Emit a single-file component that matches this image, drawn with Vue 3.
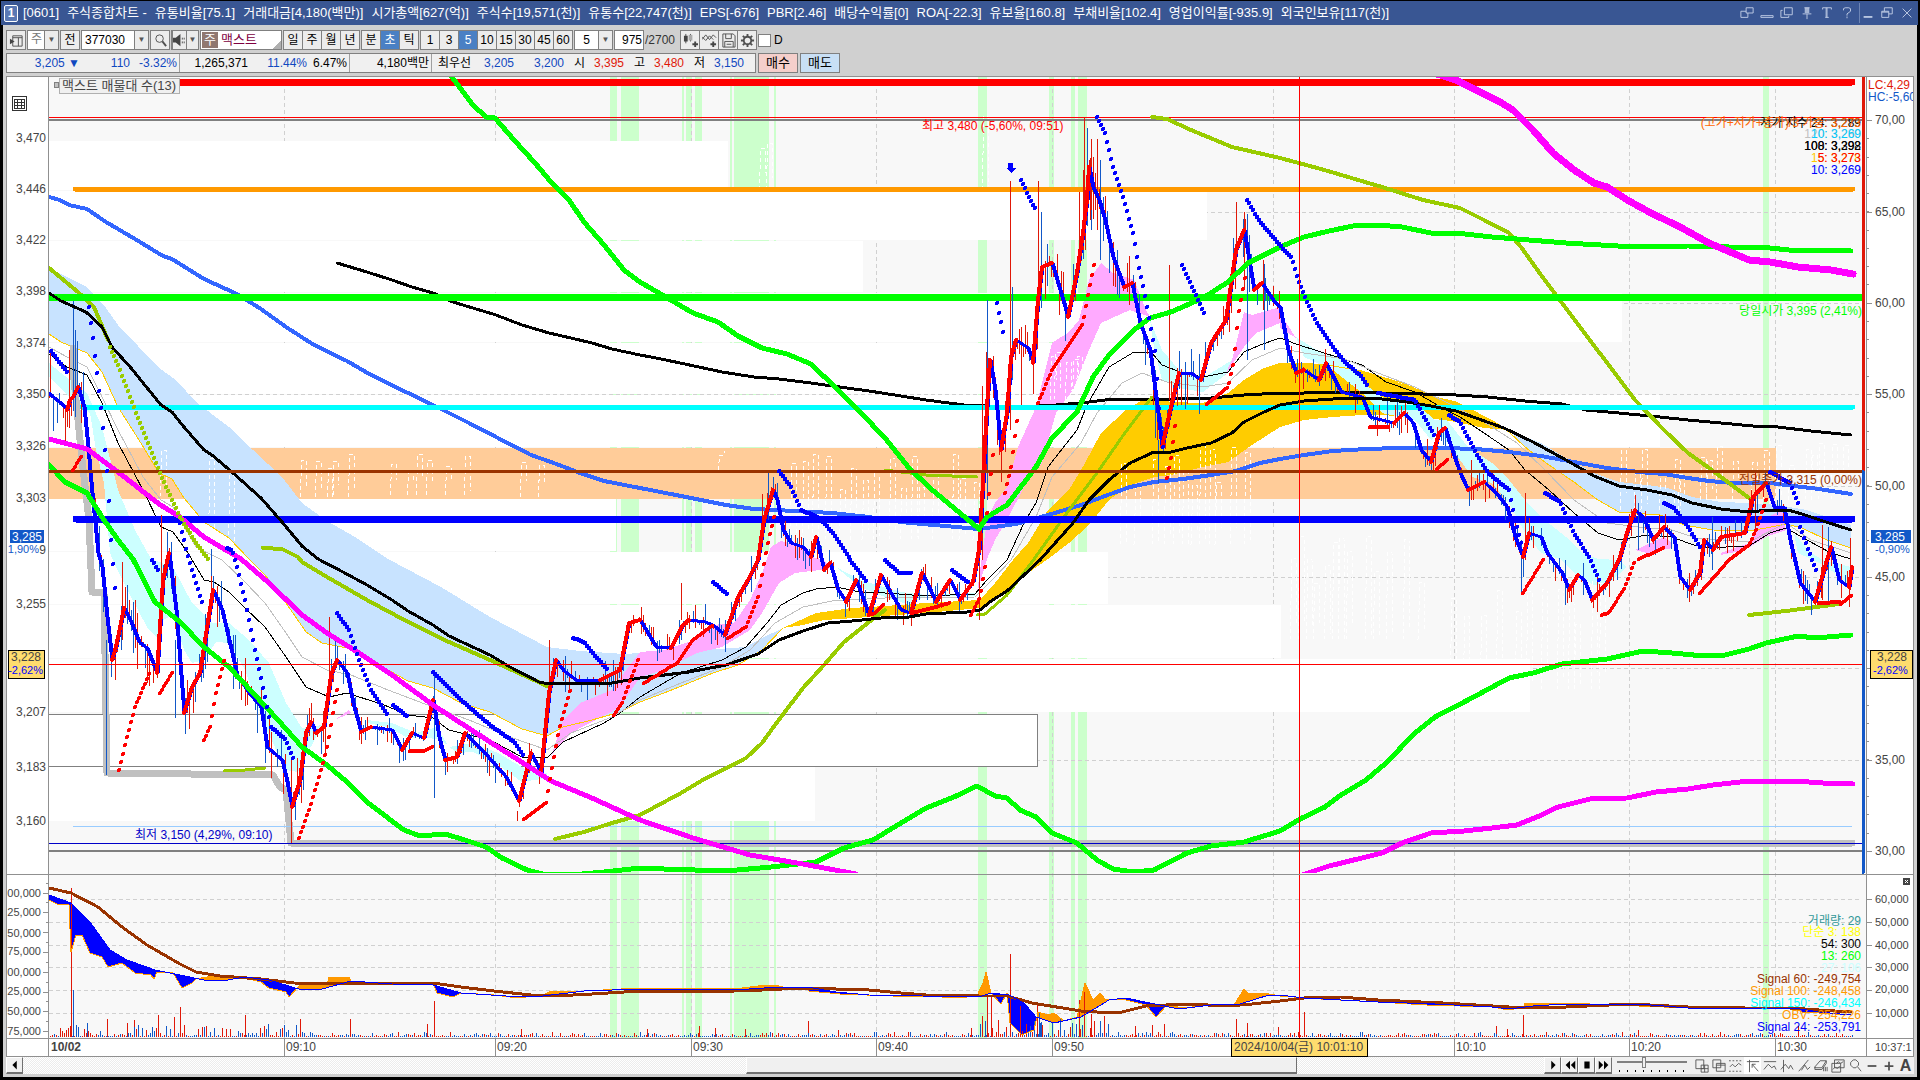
<template>
  <div class="window">
    <header class="titlebar">
      <span class="badge">1</span>
      <h1 class="title">
        <span v-for="t in titleParts" :key="t">{{ t }}</span>
      </h1>
      <div class="win-buttons">
        <button v-for="b in winButtons" :key="b.label" :aria-label="b.label" :class="{ split: b.split }">
          <svg viewBox="0 0 16 16"><path :d="b.d" /></svg>
        </button>
      </div>
    </header>

    <main class="body">
      <div class="toolbar">
        <button class="tool" aria-label="패널">
          <svg viewBox="0 0 16 16"><path d="M4 3h10v11H4zM4 5h10M10 5v9" /><path class="solid" d="M1 6l5 3-5 3z" /></svg>
        </button>
        <span class="combo c-type"><span class="dim">주</span><button aria-label="종류">▼</button></span>
        <button class="tool">전</button>
        <span class="combo c-code"><input aria-label="종목코드" value="377030" /><button aria-label="종목 목록">▼</button></span>
        <button class="tool" aria-label="검색">
          <svg viewBox="0 0 16 16"><circle cx="7" cy="6" r="4" /><path class="bold" d="M10 9l4 5" /></svg>
        </button>
        <span class="combo c-sound">
          <button aria-label="소리"><svg viewBox="0 0 16 16"><path class="solid" d="M1 5h3l5-4v13l-5-4H1z" /><path d="M11 5v2M13 5v2M11 9v2M13 9v2" /></svg></button>
          <button aria-label="소리 설정">▼</button>
        </span>
        <span class="stock"><i>주</i>맥스트</span>
        <div v-for="(g, i) in groups" :key="i" class="group">
          <button v-for="b in g" :key="b" :class="{ on: b === '초' || b === '5' }">{{ b }}</button>
        </div>
        <span class="combo c-num"><input aria-label="주기" value="5" /><button aria-label="주기 목록">▼</button></span>
        <span class="combo c-count"><input aria-label="봉 개수" value="975" /></span>
        <span class="total">/2700</span>
        <div class="group icons">
          <button aria-label="차트 추가"><svg viewBox="0 0 16 16"><path d="M3 1v10M8 1v8" /><path class="solid" d="M1 3h4v6H1zM10 11h6v2h-6zM12 9h2v6h-2z" /><path class="soft" d="M6 2h4v6H6z" /></svg></button>
          <button aria-label="지표 추가"><svg viewBox="0 0 16 16"><path d="M0 7l4-5 4 5 4-5 3 3M0 4l4 4 4-5 4 4" /><path class="solid" d="M9 11h6v2H9zM11 9h2v6h-2z" /></svg></button>
          <button aria-label="저장"><svg viewBox="0 0 16 16"><path d="M2 1h11l2 2v12H2zM5 1v5h6V1M4 15v-6h9v6M6 12h5" /></svg></button>
          <button aria-label="설정"><svg viewBox="0 0 16 16"><circle class="bold" cx="8" cy="8" r="4" /><path class="bold" d="M8 1v3M8 12v3M1 8h3M12 8h3M3 3l2 2M11 11l2 2M13 3l-2 2M3 13l2-2" /></svg></button>
        </div>
        <label class="check"><input type="checkbox" />D</label>
      </div>

      <div class="quote">
        <div class="cells">
          <span v-for="(q, i) in quotes" :key="i" :class="['q', q[1], q[2], { line: q[3] }]">{{ q[0] }}</span>
        </div>
        <button class="buy">매수</button>
        <button class="sell">매도</button>
      </div>

      <svg class="chart" viewBox="6 76 1908 981" role="img" aria-label="맥스트 주가 차트">
        <defs>
          <clipPath id="plot"><rect x="49" y="77" width="1813" height="796" /></clipPath>
          <clipPath id="frame"><rect x="6" y="76" width="1907" height="981" /></clipPath>
        </defs>
        <rect class="paper" x="6" y="76" width="1908" height="981" />
        <rect class="plot-bg" x="49" y="77" width="1818" height="961" />

        <rect v-for="b in bands" :key="b[0]" class="band" :x="b[0]" y="77" :width="b[1]" height="961" />
        <path class="grid" :d="gridPath" />
        <rect v-for="p in profile" :key="p[0]" class="profile" x="49" :y="p[0]" :width="p[2] - 49" :height="p[1] - p[0] - 1" />
        <rect class="profile-now" x="49" y="448" width="1727" height="51" />
        <rect class="profile-box" x="48" y="714" width="989" height="52" />

        <g clip-path="url(#plot)">
          <path v-for="(c, i) in clouds" :key="'c' + i" :fill="c[0]" :d="toPath(c[1]) + 'Z'" />
          <path class="ghost" :d="ghostPath" />
          <path class="ln" stroke="#ffcc00" :d="toPath(yellowEdge)" />
          <path class="ln" stroke="#ffcc00" :d="toPath(yellowEdgeRight)" />
          <path class="ln" stroke="#c0c0c0" stroke-width="7" :d="toPath(stair)" />
          <path class="ln" stroke="#c0c0c0" stroke-width="7" d="M291 843H1852" />
          <path class="ln" stroke="#99ccff" d="M73 826H1852" />
          <path class="ln" stroke="#0000c8" d="M49 843H1862" />
          <path class="ln" stroke="#808080" stroke-width="2" d="M49 851H1862M49 120H1862" />
          <path class="ln" stroke="#ff0000" stroke-width="7" d="M179 82H1852" />
          <path class="ln" stroke="#ff0000" d="M49 117H1862" />
          <path class="ln" stroke="#ff9900" stroke-width="5" d="M75 189H1853" />
          <path v-for="(s, i) in thin" :key="'t' + i" class="ln" :stroke="s[0]" :stroke-width="s[1]" :d="toPath(s[2])" />
          <path class="ln" stroke="#00ff00" stroke-width="7" d="M49 297H1862" />
          <path class="ln" stroke="#00ffff" stroke-width="5" d="M82 407H1853" />
          <path class="ln" stroke="#0000ff" stroke-width="7" d="M76 519H1852" />
          <path class="ln" stroke="#1258c8" :d="wicks.down" />
          <path class="ln" stroke="#e01808" :d="wicks.up" />
          <path class="ln" stroke="#0000ff" :d="toPath(slowPrice)" />
          <path class="ln" stroke="#0000ff" stroke-width="3" :d="body.down" />
          <path class="ln" stroke="#ff0000" stroke-width="4" :d="body.up" />
          <path v-for="(s, i) in thick" :key="'k' + i" class="ln" :stroke="s[0]" :stroke-width="s[1]" :d="toPath(s[2])" />
          <path class="ln" stroke="#993300" stroke-width="3" d="M49 471H1862" />
          <path class="ln" stroke="#99cc00" stroke-width="4" :d="dots(oliveDots)" />
          <path class="ln" stroke="#0000ff" stroke-width="4" :d="dots(sarDown)" />
          <path class="ln" stroke="#ff0000" stroke-width="4" :d="dots(sarUp)" />
          <path fill="#0000ff" d="M1008 163h5v5h3l-5 5-5-5h2z" />
        </g>

        <g>
          <path class="ln" stroke="#ff9900" :d="obvFill.above" />
          <path class="ln" stroke="#0000ff" :d="obvFill.below" />
          <path class="ln" stroke="#e01808" :d="volume.up" />
          <path class="ln" stroke="#1258c8" :d="volume.down" />
          <path class="ln" stroke="#ff9900" :d="toPath(obv)" />
          <path class="ln" stroke="#993300" stroke-width="3" :d="toPath(signal60)" />
          <path class="ln" stroke="#0000ff" :d="toPath(signal24)" />
        </g>

        <path class="ln" stroke="#ff0000" d="M49 664H1862M1299 77V1038" />
        <path class="ln" stroke="#e01808" stroke-width="3" d="M1863 77V471" />
        <path class="ln" stroke="#1258c8" stroke-width="3" d="M1863 471V873" />
        <path class="axis" :d="axisPath" />

        <g class="txt">
          <text v-for="l in leftLabels" :key="l[0]" x="46" :y="l[1]" text-anchor="end">{{ l[0] }}</text>
          <text v-for="l in rightLabels" :key="l[0]" :class="{ small: l[0].length > 5 }" x="1875" :y="l[1]">{{ l[0] }}</text>
          <text v-for="(l, i) in volLabels" :key="'v' + i" class="small" x="41" :y="l[1]" text-anchor="end">{{ l[0] }}</text>
          <text v-for="l in timeLabels" :key="l[0]" :x="l[1] + 2" y="1051">{{ l[0] }}</text>
          <text class="strong" x="51" y="1051">10/02</text>
          <text class="small" x="1875" y="1051">10:37:1</text>
          <g clip-path="url(#frame)">
            <text x="1868" y="89" fill="#e01808">LC:4,29</text>
            <text x="1868" y="101" fill="#1258c8">HC:-5,60</text>
          </g>
          <text x="922" y="130" fill="#ff0000">최고 3,480 (-5,60%, 09:51)</text>
          <text x="135" y="839" fill="#0000c8">최저 3,150 (4,29%, 09:10)</text>
          <text x="1862" y="315" fill="#00ff00" text-anchor="end">당일시가 3,395 (2,41%)</text>
          <text x="1862" y="484" fill="#993300" text-anchor="end">전일종가 3,315 (0,00%)</text>
          <text v-for="(l, i) in legend" :key="'l' + i" x="1861" :y="l[2]" :fill="l[1]" text-anchor="end">{{ l[0] }}</text>

          <rect class="tag-now" x="10" y="530" width="34" height="13" />
          <rect class="tag-now" x="1871" y="530" width="40" height="13" />
          <text x="12" y="541" fill="#ffffff">3,285</text>
          <text x="1875" y="541" fill="#ffffff">3,285</text>
          <text class="small" x="39" y="553" fill="#1258c8" text-anchor="end">1,90%</text>
          <text x="46" y="554" text-anchor="end">9</text>
          <text class="small" x="1875" y="553" fill="#1258c8">-0,90%</text>
          <rect class="tag" x="8" y="650" width="36" height="28" />
          <rect class="tag" x="1870" y="650" width="42" height="28" />
          <text x="41" y="661" text-anchor="end">3,228</text>
          <text class="small" x="43" y="674" fill="#0000ff" text-anchor="end">-2,62%</text>
          <text x="1877" y="661">3,228</text>
          <text class="small" x="1873" y="674" fill="#0000ff">-2,62%</text>
          <rect class="tag" x="1231" y="1038" width="136" height="18" />
          <text x="1234" y="1051">2024/10/04(금) 10:01:10</text>

          <rect class="name-box" x="59" y="78" width="120" height="15" />
          <rect class="name-mark" x="54" y="82" width="4" height="5" />
          <text class="name" x="62" y="90">맥스트 매물대 수(13)</text>
        </g>
        <path class="table-icon" d="M12 96h14v14H12zM14 99h10v9H14zM14 102h10M14 105h10M17 99v9M21 99v9" />
        <rect class="close-box" x="1903" y="878" width="7" height="7" />
        <path class="ln" stroke="#ffffff" d="M1905 880l3 3M1908 880l-3 3" />
      </svg>

      <footer class="bottom">
        <button class="raised" aria-label="왼쪽으로"><svg viewBox="0 0 16 16"><path class="ink" d="M10 3v10L5 8z" /></svg></button>
        <div class="track"><span class="before"></span><span class="thumb"></span><span class="after"></span></div>
        <div class="play">
          <button class="raised" aria-label="재생"><svg viewBox="0 0 16 16"><path class="ink" d="M6 3v10l5-5z" /></svg></button>
          <button class="raised" aria-label="뒤로"><svg viewBox="0 0 16 16"><path class="ink" d="M8 3v10L3 8zM14 3v10L9 8z" /></svg></button>
          <button class="raised" aria-label="정지"><svg viewBox="0 0 16 16"><path class="ink" d="M5 4h6v8H5z" /></svg></button>
          <button class="raised" aria-label="앞으로"><svg viewBox="0 0 16 16"><path class="ink" d="M2 3v10l5-5zM8 3v10l5-5z" /></svg></button>
        </div>
        <label class="speed">
          <input type="range" min="0" max="8" value="3" aria-label="속도" />
          <span class="ticks"></span>
        </label>
        <div class="tools">
          <button v-for="t in tools" :key="t.label" :aria-label="t.label" :class="{ lit: t.lit }">
            <svg viewBox="0 0 16 16"><path :class="{ bold: t.bold }" :d="t.d" /></svg>
          </button>
          <button class="letter">A</button>
        </div>
      </footer>
    </main>
  </div>
</template>

<script setup>
const titleParts = [
  "[0601]", "주식종합차트 -", "유통비율[75.1]", "거래대금[4,180(백만)]", "시가총액[627(억)]",
  "주식수[19,571(천)]", "유통수[22,747(천)]", "EPS[-676]", "PBR[2.46]", "배당수익률[0]", "ROA[-22.3]",
  "유보율[160.8]", "부채비율[102.4]", "영업이익률[-935.9]", "외국인보유[117(천)]",
];

const winButtons = [
  { label: "분리", d: "M7 2h8v6H7zM9 8v5H1V6h6" },
  { label: "축소", d: "M1 11h14v2H1z" },
  { label: "복사", d: "M5 2h9v8H5zM3 5H1v8h9v-2" },
  { label: "고정", d: "M5 2h6M6 2v6M10 2v6M3 9h10M8 9v6M7 2v6M8 2v6M9 2v6" },
  { label: "글자", d: "M3 4V2h10v2M8 2v11M6 13h4M7 2v11" },
  { label: "도움말", d: "M4 5V3l2-1h4l2 1v3L8 9v2M8 12v2" },
  { label: "최소화", d: "M3 12h10M3 13h10", split: true },
  { label: "이전 크기", d: "M5 6V2h9v7h-4M2 6h8v7H2zM2 7h8" },
  { label: "닫기", d: "M3 3l10 10M13 3L3 13" },
];

const groups = [
  ["일", "주", "월", "년"],
  ["분", "초", "틱"],
  ["1", "3", "5", "10", "15", "30", "45", "60"],
];

// text, colour, width class, divider after
const quotes = [
  ["3,205 ▼", "blue", "w73"], ["110", "blue", "w49"], ["-3.32%", "blue", "w49", true],
  ["1,265,371", "", "w68"], ["11.44%", "blue", "w59"], ["6.47%", "", "w43", true],
  ["4,180백만", "", "w82", true], ["최우선", "", "w38"], ["3,205", "blue", "w43"], ["3,200", "blue", "w49"],
  ["시", "", "w20", false], ["3,395", "red", "w38"], ["고", "", "w20"], ["3,480", "red", "w38"],
  ["저", "", "w20"], ["3,150", "blue", "w38"],
];

const tools = [
  { label: "창 추가", d: "M1 1h9v10H1zM7 7h8v8H7zM11 7v8M7 11h8" },
  { label: "창 복사", d: "M1 1h9v9H1zM5 5h10v9H5zM5 7h10" },
  { label: "축 맞춤", d: "M0 2h2M4 2h2M8 2h2M12 2h2M0 14h2M4 14h2M8 14h2M12 14h2M1 9l3-3 3 3 4-4 3 2" },
  { label: "십자선", d: "M1 3h14M4 1v14M7 6l7 8M7 6h4M7 6v4", lit: true },
  { label: "수평선", d: "M1 3h14M1 12l5-6 4 4 3-2 2 4" },
  { label: "수직선", d: "M4 1v14M1 12l5-6 4 5 2-4 3 5" },
  { label: "추세선", d: "M2 14L13 1M5 13l4-6 3 5 3-3" },
  { label: "지우개", d: "M1 9l6-7h7l-5 8H1zM1 9v3h8l5-7V2M11 9v5M13 9v5M15 9v5" },
  { label: "차트 비교", d: "M4 1h11v9H4zM1 5h10v10H1zM2 12l3-3 2 2 3-3M6 5l3-2 2 2 3-2" },
  { label: "확대경", d: "M6 1h3l3 3v3l-3 3H6L3 7V4zM11 9l4 5" },
  { label: "축소", d: "M3 8h10", bold: true },
  { label: "확대", d: "M3 8h10M8 3v10", bold: true },
];

// Curves are kept as digitised: three sheets of 1568 units across the plot,
// 49 units per 20px horizontally and 3 units per px vertically.
function at(sheet, top, text) {
  return text.trim().split(/\s+/).map((pair) => {
    const [x, y] = pair.split(",").map(Number);
    return [Math.round(sheet * 640 + x / 2.45), Math.round((top + y) / 3)];
  });
}
const toPath = (pts) => "M" + pts.map((p) => p.join(" ")).join("L");

function seeded(seed) {
  let s = seed;
  return () => {
    s = (s * 16807) % 2147483647;
    return s / 2147483647;
  };
}

// y at every step px of a polyline
function sample(pts, step) {
  const out = [];
  let i = 0;
  for (let x = pts[0][0]; x <= pts[pts.length - 1][0]; x += step) {
    while (i < pts.length - 2 && pts[i + 1][0] < x) i++;
    const [x1, y1] = pts[i];
    const [x2, y2] = pts[i + 1];
    out.push([x, Math.round(x2 === x1 ? y2 : y1 + ((y2 - y1) * (x - x1)) / (x2 - x1))]);
  }
  return out;
}

const bands = [
  [610, 7], [621, 18], [682, 2], [686, 6], [695, 7], [730, 2], [734, 35], [774, 2],
  [978, 9], [1049, 5], [1071, 4], [1078, 9], [1763, 6],
];
const profile = [
  [141, 191, 728], [191, 241, 1207], [241, 293, 863], [293, 343, 1622], [343, 395, 1454],
  [395, 448, 1660], [499, 552, 616], [552, 605, 1108], [605, 659, 1281], [659, 713, 1530], [767, 822, 815],
];
const timeLabels = [
  ["09:10", 284], ["09:20", 495], ["09:30", 691], ["09:40", 876], ["09:50", 1052],
  ["10:10", 1454], ["10:20", 1629], ["10:30", 1775],
];
const leftLabels = [
  ["3,470", 142], ["3,446", 193], ["3,422", 244], ["3,398", 295], ["3,374", 347], ["3,350", 398],
  ["3,326", 450], ["3,303", 502], ["3,255", 608], ["3,207", 716], ["3,183", 771], ["3,160", 825],
];
const rightLabels = [
  ["70,00", 124], ["65,00", 216], ["60,00", 307], ["55,00", 398], ["50,00", 490], ["45,00", 581],
  ["35,00", 764], ["30,00", 855], ["60,000", 903], ["50,000", 926], ["40,000", 949], ["30,000", 971],
  ["20,000", 993], ["10,000", 1017],
];
const volLabels = [
  ["00,000", 897], ["25,000", 916], ["50,000", 937], ["75,000", 955],
  ["00,000", 976], ["25,000", 995], ["50,000", 1015], ["75,000", 1035],
];
const legend = [
  ["저가 지수 24: 3,289", "#000000", 127], ["(고가+저가+종가)/3 가중: 3,273", "#ff6600", 127],
  ["120: 3,280", "#c0c0c0", 138], ["10: 3,269", "#00ccff", 138],
  ["100: 3,292", "#000000", 150], ["108: 3,398", "#000000", 150],
  ["15: 3,278", "#ffcc00", 162], ["5: 3,273", "#ff0000", 162],
  ["30: 3,269", "#ccecff", 174], ["10: 3,269", "#0000ff", 174],
  ["거래량: 29", "#339999", 925], ["단순 3: 138", "#ffff00", 936], ["54: 300", "#000000", 948],
  ["13: 260", "#00ff00", 960], ["27: 106", "#ccffff", 972], ["Signal 60: -249,754", "#993300", 983],
  ["Signal 100: -248,458", "#ff9900", 995], ["Signal 150: -246,434", "#00ffff", 1007],
  ["OBV: -254,226", "#ff9900", 1019], ["Signal 24: -253,791", "#0000ff", 1031],
];

const mainTicks = [120, 212, 303, 394, 486, 577, 668, 760, 851];
const subTicks = [899, 922, 945, 967, 990, 1013];
const gridPath =
  timeLabels.map((t) => `M${t[1]} 89V1038`).join("") + "M1273 89V1038" +
  mainTicks.concat(subTicks).map((y) => `M49 ${y}H1862`).join("");

const axisPath =
  "M6 76H1914M6 76V1057M1913 76V1057M48 77V1057M1866 77V1057M6 874H1914M6 1038H1914M6 1056H1914" +
  timeLabels.map((t) => `M${t[1]} 1038V1056`).join("") +
  mainTicks.concat(subTicks).map((y) => `M1866 ${y}h6`).join("") +
  Array.from({ length: 40 }, (_, i) => `M1866 ${Math.round(120 + i * 18.27)}h3`).join("") +
  [893, 912, 932, 952, 972, 992, 1011, 1031].map((y) => `M49 ${y}h-6M49 ${y - 10}h-3`).join("");

const yellowEdge = [
  ...at(0, 600, "119,402 150,425 212,458 250,515 290,620 340,720 390,820 421,838 450,895 500,965 560,1015 610,1078"),
  ...at(0, 1680, "650,45 700,130 750,215 790,250 850,265 950,330 1000,362 1060,385 1130,430 1200,457 1280,508 1340,527 1380,500 1450,480 1520,455 1568,425"),
  ...at(1, 1680, "60,400 120,370 180,340 240,315 300,270 350,205"),
];
const yellowEdgeRight = at(2, 600, "60,490 130,498 200,512 300,550 380,590 430,605 480,635 560,695 600,740 660,795 720,845 780,900 830,935 930,945 990,975 1060,990 1150,993 1190,985 1240,972 1280,985 1340,1020 1400,1045");

const clouds = [
  ["#c8e3ff", [
    ...at(0, 600, "119,205 212,262 260,325 290,375 390,505 430,540 480,605 560,680 620,750 690,830 740,910 800,962 870,1010 950,1078"),
    ...at(0, 1680, "1080,80 1200,170 1340,262 1420,272 1530,283"),
    ...at(1, 1680, "0,280 100,275 190,266 260,260 300,235 350,205"),
    ...yellowEdge.slice().reverse(),
  ]],
  ["#ffcc00", [
    ...at(1, 1680, "350,205 430,160 520,143 600,138 700,130 833,120 870,70 915,0"),
    ...at(1, 600, "950,1030 1000,930 1050,870 1090,790 1130,700 1190,630 1240,595 1270,595 1300,605 1380,608 1440,580 1480,540 1530,505 1568,488"),
    ...at(2, 600, "60,490 130,498 200,512 250,530 320,560 380,590 430,605 480,635 520,660 560,690 500,683 430,665 380,658 320,650 250,645 200,645 130,652 60,660 0,680"),
    ...at(1, 600, "1500,735 1440,785 1380,800 1300,825 1260,830 1200,855 1150,900 1100,975 1050,1030 1000,1078"),
    ...at(1, 1680, "950,40 900,90 860,120 833,145 700,160 560,170 450,180 400,195"),
  ]],
  ["#c8e3ff", at(2, 600, "560,690 640,730 700,775 770,820 830,845 900,855 950,865 1010,890 1080,905 1150,910 1220,915 1290,930 1340,950 1400,975 1400,1045 1340,1020 1280,985 1240,972 1190,985 1150,993 1060,990 990,975 930,945 830,935 780,900 720,845 660,795 600,740")],
  ["#ccffff", [
    ...at(0, 600, "119,490 150,520 212,580 250,680 290,870 330,990 370,1078"),
    ...at(0, 1680, "425,20 470,130 520,190 560,190 610,240 660,310 700,430 740,505 790,495 730,635 700,630 650,500 600,330 560,250 530,245 500,300 470,310 450,270 425,165 400,180 385,235 360,200 320,110 285,20"),
    ...at(0, 600, "270,1060 255,850 235,750 220,640 160,580 119,530"),
  ]],
  ["#ccffff", at(0, 1680, "900,480 960,490 1020,520 1070,500 1100,560 1160,550 1220,580 1290,630 1340,640 1340,655 1280,665 1220,615 1160,575 1120,580 1080,540 1040,530 1000,535 950,500 900,490")],
  ["#ffaaff", at(0, 1680, "820,480 855,450 860,460 830,475")],
  ["#ffaaff", [
    ...at(0, 1680, "1350,590 1380,480 1420,430 1500,390 1530,340 1568,275"),
    ...at(1, 1680, "60,270 120,245 180,195 230,190 270,120 300,40"),
    ...at(1, 600, "320,1040 345,1022 390,1035 420,1070 445,1078"),
    ...at(1, 1680, "470,25 440,30 380,40 340,70 300,160 270,210 200,260 140,280 60,330 0,350"),
    ...at(0, 1680, "1520,440 1400,520 1360,570"),
  ]],
  ["#ccffff", at(1, 1680, "480,20 540,60 640,95 700,105 820,100 820,108 700,108 660,135 600,110 540,80")],
  ["#ffaaff", [
    ...at(1, 1680, "825,100"),
    ...at(1, 600, "850,960 870,910 900,860 925,740 970,620 1010,430 1050,395 1075,360 1100,240 1130,190 1160,220 1210,240 1240,330 1250,350 1200,330 1130,370 1100,450 1060,570 1020,640 985,790 940,860 900,960 870,1020 850,1078"),
  ]],
  ["#ccffff", at(1, 600, "1250,360 1280,450 1320,510 1380,535 1450,480 1440,520 1380,575 1320,565 1280,540 1260,440")],
  ["#ffaaff", [
    ...at(1, 600, "1450,480 1480,335 1500,345 1568,320"),
    ...at(2, 600, "0,340 40,415 0,385"),
    ...at(1, 600, "1568,370 1510,400 1480,440 1430,530"),
  ]],
  ["#ccffff", [
    ...at(2, 600, "40,410 100,460 160,480 210,555 260,600 330,610 380,660 410,660 460,740 520,790 560,840 600,900 640,950 700,1010 740,1060 780,1078"),
    ...at(2, 1680, "830,0 850,20 800,75 770,75 720,40 690,0"),
    ...at(2, 600, "640,1060 600,1000 560,910 520,850 470,830 420,740 390,700 370,720 330,660 250,640 200,580 130,510 60,470"),
  ]],
  ["#ffaaff", at(2, 600, "870,1050 940,1010 960,1030 960,1045 900,1060")],
  ["#ffaaff", at(2, 600, "1080,1060 1150,1030 1180,960 1230,930 1240,990 1190,1010 1140,1050 1080,1065")],
  ["#ccffff", [
    ...at(2, 600, "1260,1000 1300,1060"),
    ...at(2, 1680, "1330,0 1400,20 1395,80 1360,40 1330,15"),
    ...at(2, 600, "1300,1078 1270,1060"),
  ]],
];

const stair = [
  ...at(0, 600, "178,445 178,510 200,780 218,960"),
  ...at(0, 1680, "225,95 255,100 262,640 668,645 685,680 700,690 712,850"),
];

const thin = [
  ["#000000", 1, [
    ...at(0, 600, "119,462 165,500 212,525 250,610 290,730 350,870 395,980 425,995 460,1060"),
    ...at(0, 1680, "500,60 525,65 560,95 600,145 650,200 700,290 750,380 805,410 850,400 940,435 1000,465 1060,475 1100,510 1200,540 1280,590 1340,595 1380,545 1480,490 1520,460 1568,412"),
    ...at(1, 1680, "100,340 200,300 260,260 310,190 345,135 400,100 430,87 480,82 540,95 600,100 700,107 820,103 850,60 900,0"),
    ...at(1, 600, "940,970 970,910 1000,800 1070,690 1095,615 1150,500 1210,455 1255,460 1280,495 1330,520 1380,532 1440,515 1480,455 1520,435 1568,415"),
    ...at(2, 600, "40,432 100,455 200,495 260,545 330,575 390,618 440,650 500,700 560,750 600,810 660,870 720,940 780,1000 830,1020 900,1005 960,1012 1000,1030 1040,1043 1150,1038 1200,998 1240,985 1290,1020 1350,1058 1400,1078"),
  ]],
  ["#c0c0c0", 1, [
    ...at(0, 600, "119,442 165,470 212,500 250,590 290,690 350,830 395,900 425,920 480,1040"),
    ...at(0, 1680, "545,0 600,65 650,130 700,220 740,290 800,330 860,345 950,390 1060,440 1150,480 1250,530 1340,570 1400,520 1500,470 1568,420"),
    ...at(1, 1680, "100,370 200,320 270,270 330,190 400,140 470,122 600,115 820,112 870,50 910,0"),
    ...at(1, 600, "970,950 1010,830 1080,730 1120,640 1180,550 1230,520 1290,545 1380,560 1440,550 1500,480 1568,445"),
    ...at(2, 600, "60,458 160,478 240,520 330,560 430,620 500,665 580,730 650,810 720,900 800,970 900,985 960,990 1020,1015 1150,1025 1240,970 1300,1020 1400,1060"),
  ]],
  ["#000000", 3, [
    ...at(0, 600, "825,190 900,215 960,240 1010,262 1060,280 1110,306 1215,346 1280,375 1345,400 1400,415 1450,430 1500,448 1568,465"),
    ...at(1, 600, "40,473 110,492 200,515 280,530 340,538 420,548 470,557 560,573 640,588 700,600 795,614 920,620 1020,614 1080,608 1140,601 1220,596 1300,596 1400,594 1480,586 1568,580"),
    ...at(2, 600, "60,579 180,577 250,580 350,583 430,586 510,592 600,602 690,613 750,630 830,640 930,650 1000,660 1080,670 1160,678 1220,681 1300,692 1400,706"),
  ]],
  ["#3366ff", 4, [
    ...at(0, 0, "119,590 148,600"),
    ...at(0, 600, "170,15 212,28 260,65 330,118 400,168 421,178 500,238 580,283 640,328 700,382 770,435 850,483 910,525 1000,580 1070,620 1150,670 1215,712 1300,765 1350,787 1420,818 1480,842 1568,864"),
    ...at(1, 600, "100,888 210,915 280,926 380,932 470,938 560,950 640,967 720,976 830,988 920,972 1000,945 1080,915 1140,887 1200,860 1260,846 1330,838 1400,826 1460,812 1520,790 1568,776"),
    ...at(2, 600, "60,764 130,753 210,747 290,743 400,743 480,747 560,757 640,768 720,785 800,803 880,815 940,823 1000,835 1050,843 1110,848 1200,850 1260,858 1320,868 1400,882"),
  ]],
  ["#99cc00", 4, at(0, 600, "119,205 190,275 230,320 265,420")],
  ["#99cc00", 4, [
    ...at(0, 600, "645,1043 690,1048 730,1070"),
    ...at(0, 1680, "740,5 800,50 900,120 1000,185 1100,245 1200,300 1340,378"),
  ]],
  ["#99cc00", 3, at(0, 1680, "550,633 600,630 650,625")],
  ["#99cc00", 4, [
    ...at(0, 1680, "1360,838 1430,815 1500,790 1568,765"),
    ...at(1, 1680, "100,700 150,663 260,593 300,550 330,495 400,385 450,315 500,245 560,185 600,150"),
  ]],
  ["#99cc00", 3, at(1, 600, "600,810 700,825 825,832")],
  ["#99cc00", 3, [
    ...at(1, 1680, "825,165 845,163 900,105 960,5"),
    ...at(1, 600, "1040,950 1120,820 1180,710 1255,590"),
  ]],
  ["#99cc00", 4, [
    ...at(1, 0, "1255,350 1290,358 1350,390 1450,440 1568,473"),
    ...at(2, 0, "100,508 250,562 350,600"),
    ...at(2, 600, "440,25 500,60 560,100 590,140 640,225 690,310 750,405 810,505 870,600 940,690 1000,760 1050,805 1150,895"),
  ]],
  ["#99cc00", 4, at(2, 1680, "1150,165 1240,152 1370,132")],
];

const thick = [
  ["#000000", 3, [
    ...at(0, 600, "119,280 150,302 210,335 250,380 275,440 320,505 395,615 421,636 450,680 500,750 520,765 570,818 640,895 690,965 740,1038 780,1078"),
    ...at(0, 1680, "840,35 900,75 960,120 1000,152 1060,195 1100,228 1200,285 1250,320 1320,366 1345,373 1400,370 1500,369 1568,355"),
    ...at(1, 1680, "120,335 210,315 290,282 340,240 400,212 460,190 520,182 590,174 660,172 700,163 800,155 833,150 860,122 900,92 980,0"),
    ...at(1, 600, "1060,970 1100,900 1150,840 1200,790 1260,755 1300,755 1340,745 1400,728 1450,698 1480,665 1530,635 1568,615"),
    ...at(2, 600, "60,603 130,597 200,594 250,597 310,605 370,618 430,633 480,655 550,683 620,725 700,780 770,828 830,858 900,870 960,885 1010,910 1080,928 1150,935 1200,930 1245,930 1280,942 1330,962 1400,990"),
  ]],
  ["#00ff00", 5, [
    ...at(0, 600, "119,795 160,845 212,880 250,950 290,1020 325,1078"),
    ...at(0, 1680, "380,125 440,185 500,260 560,320 620,400 680,480 740,560 800,615 850,665 900,725 950,775 990,810 1030,827 1090,823 1140,840 1190,862 1230,895 1290,930 1330,942 1400,945 1480,935 1568,923"),
    ...at(1, 1680, "60,928 210,934 320,920 430,905 500,865 570,840 640,790 700,745 770,710 825,677 870,708 900,715 930,750 970,772 1010,820 1070,850 1120,900 1160,928 1210,936 1260,930 1340,880 1400,857 1480,847 1568,812"),
    ...at(2, 1680, "50,778 110,742 150,705 210,660 260,608 330,520 380,470 460,420 560,355 620,340 690,312 800,297 890,273 960,280 1040,287 1090,284 1150,268 1190,250 1270,228 1310,234 1400,226"),
  ]],
  ["#00ff00", 5, [
    ...at(0, 0, "1105,228 1130,268 1160,315 1190,350 1212,355 1260,420 1310,490 1350,545 1395,600"),
    ...at(0, 600, "1430,65 1480,135 1530,210 1568,245"),
    ...at(1, 600, "60,287 130,338 190,365 240,408 300,445 360,462 420,492 480,565 540,635 600,715 660,805 710,865 770,925 830,987 850,950 900,915 970,800 1010,715 1070,635 1110,530 1150,465 1210,390 1250,355 1300,335 1380,295 1440,245 1490,190 1568,140"),
    ...at(2, 600, "60,110 120,92 180,78 240,75 300,80 370,98 430,98 520,112 700,128 870,140 1000,139 1100,140 1200,145 1270,152 1320,149 1400,152"),
  ]],
  ["#ff00ff", 5, [
    ...at(0, 600, "119,716 212,748 290,815 390,912 440,950 500,1010 590,1078"),
    ...at(0, 1680, "660,70 740,165 800,220 880,280 960,345 1060,435 1200,545 1300,625 1350,662 1450,715 1568,780"),
    ...at(1, 1680, "130,835 270,885 400,912 530,942"),
  ]],
  ["#ff00ff", 7, [
    ...at(2, 0, "385,222 430,240 480,270 540,305 570,330 620,390 670,460 720,510 770,550 800,562 855,603"),
    ...at(2, 600, "910,40 980,80 1050,130 1150,180 1200,187 1270,200 1350,210 1405,222"),
  ]],
  ["#ff00ff", 5, at(2, 1680, "55,944 120,918 200,895 250,878 300,850 370,818 450,812 520,805 580,795 630,770 680,740 760,718 850,713 920,697 1000,686 1060,675 1150,664 1260,664 1330,670 1405,673")],
];

const price = [
  ...at(0, 600, "119,580 130,590 150,610 165,630 172,600 180,590 190,560 205,620 215,740 225,880 240,1060"),
  ...at(0, 1680, "250,20 262,170 275,300 285,260 305,145 320,185 340,245 360,265 385,340 400,60 415,-20 430,150 450,460 470,380 490,340 500,260 522,90 545,150 560,240 580,345 610,400 640,440 655,560 690,600 700,650 716,740 735,660 750,520 762,485 775,520 795,500 810,345 825,300 850,340 865,430 885,515 910,500 960,510 985,570 1010,520 1040,535 1060,420 1075,530 1090,600 1120,590 1140,520 1180,570 1240,650 1272,722 1300,580 1325,640 1345,400 1362,300 1380,330 1410,360 1470,360 1520,330 1540,190 1568,180"),
  ...at(1, 1680, "15,210 40,260 75,265 105,195 120,180 160,185 180,195 208,225 240,110 265,60 290,0"),
  ...at(1, 600, "305,960 325,870 335,900 350,990 370,1030 400,1040 418,1070 430,1010"),
  ...at(1, 1680, "450,30 465,10 485,90 505,125 530,60 560,165 590,45 610,90 640,150 665,160 690,40 725,125 760,60 785,120 815,65"),
  ...at(1, 600, "830,1050 840,850 850,620 858,480 870,570 885,750 900,640 910,470 920,420 950,445 963,490 975,300 985,200 1010,190 1030,270 1048,350 1070,220 1085,100 1095,0"),
  ...at(1, 0, "1100,500 1110,560 1125,600"),
  ...at(1, 600, "1140,60 1160,170 1185,260 1205,250 1225,370 1250,450 1268,640 1280,740 1300,620 1320,520 1350,520 1375,540 1400,430 1435,360 1460,150 1480,90 1505,270 1525,250 1550,300 1568,320"),
  ...at(2, 600, "20,450 40,520 60,510 95,540 112,490 150,575 200,590 220,650 280,670 305,640 325,670 345,750 370,785 390,700 405,685 420,740 440,820 460,870 500,845 530,880 555,920 575,1010 595,1070 610,1000 640,1010 655,1060"),
  ...at(2, 1680, "690,40 708,90 730,45 745,60 765,120 800,70 830,0"),
  ...at(2, 600, "850,1000 870,930 890,950 915,1020 940,980 965,1010"),
  ...at(2, 1680, "980,50 1005,90 1030,40"),
  ...at(2, 600, "1040,1020 1060,1050 1080,1010 1140,1000 1160,890 1190,850 1210,920 1235,920 1250,1020"),
  ...at(2, 1680, "1275,70 1310,125 1340,0"),
  ...at(2, 600, "1350,1040"),
  ...at(2, 1680, "1370,60 1395,80 1402,20"),
];
// the slower line trails by a couple of px
const slowPrice = price.map(([x, y]) => [x + 2, y]);

function priceBody() {
  const out = { up: "", down: "" };
  for (let i = 1; i < price.length; i++) {
    const [x1, y1] = price[i - 1];
    const [x2, y2] = price[i];
    out[y2 < y1 ? "up" : "down"] += `M${x1} ${y1}L${x2} ${y2}`;
  }
  return out;
}
const body = priceBody();

function priceWicks() {
  const rnd = seeded(77);
  const out = { up: "", down: "" };
  sample(price, 2).forEach(([x, y]) => {
    const busy = (x > 980 && x < 1270) || x < 340 ? 34 : 18;
    const side = rnd() < 0.5 ? "up" : "down";
    if (rnd() < 0.85) out[side] += `M${x} ${y - Math.round(rnd() ** 2 * busy)}V${y + 2 + Math.round(rnd() ** 2 * busy)}`;
  });
  // the long shadows: x, top, bottom
  const tallUp = [
    [50, 352, 394], [69, 350, 428], [122, 562, 640], [161, 515, 600], [329, 617, 680], [549, 640, 690], [517, 811, 821],
    [681, 583, 620], [762, 494, 530], [979, 540, 620], [982, 386, 560], [986, 352, 470], [1010, 181, 430], [1038, 181, 300],
    [1021, 330, 405], [1079, 192, 270], [1083, 170, 250], [1084, 117, 230], [1090, 158, 220], [1091, 139, 210],
    [1097, 139, 230], [1169, 265, 400], [1236, 202, 250], [1244, 212, 290], [1471, 460, 500], [1525, 493, 560],
    [1755, 473, 530], [1822, 525, 600], [1850, 538, 590], [291, 760, 843],
  ];
  const tallDown = [
    [73, 301, 400], [75, 330, 417], [77, 341, 390], [106, 640, 775], [175, 640, 718], [211, 549, 600], [434, 670, 798],
    [768, 473, 520], [987, 300, 500], [1012, 287, 380], [1041, 212, 300], [1087, 128, 200], [1091, 139, 230], [1100, 160, 260],
    [1155, 370, 438], [1158, 440, 483], [1247, 214, 360], [1264, 264, 350], [1325, 352, 372], [1638, 503, 550], [1712, 517, 570],
    [1828, 527, 604], [1387, 394, 425], [1521, 540, 594], [1565, 560, 605],
  ];
  tallUp.forEach((w) => (out.up += `M${w[0]} ${w[1]}V${w[2]}`));
  tallDown.forEach((w) => (out.down += `M${w[0]} ${w[1]}V${w[2]}`));
  return out;
}
const wicks = priceWicks();

const sarDown = [
  at(0, 600, "125,452 165,515"),
  [...at(0, 600, "218,320 228,415 238,520 250,650 265,845 272,1020"), ...at(0, 1680, "282,85")],
  at(0, 1680, "372,0 387,30"),
  [...at(0, 600, "440,970 458,1060"), ...at(0, 1680, "465,10 480,70 495,125")],
  [...at(0, 600, "556,1043 568,1050"), ...at(0, 1680, "578,10 600,120 625,270 650,410 665,500 700,540 718,595")],
  at(0, 1680, "825,160 855,210 880,300 910,390 950,465"),
  at(0, 1680, "962,435 1000,470"),
  at(0, 1680, "1062,335 1130,420 1200,495 1260,545 1282,585"),
  at(0, 1680, "1405,233 1430,245 1460,290 1490,330"),
  at(1, 1680, "180,65 212,103"),
  at(1, 600, "340,812 370,860 395,930 440,955 480,1010 515,1078"),
  at(1, 1680, "515,0 555,65"),
  at(1, 1680, "600,0 635,40 665,40"),
  at(1, 1680, "765,30 805,68"),
  at(1, 600, "875,310 892,410"),
  [...at(1, 0, "933,540 955,597"), ...at(1, 600, "970,30")],
  [...at(1, 0, "1120,350 1140,400 1160,500 1183,590"), ...at(1, 600, "1188,12 1210,110 1220,190 1235,270 1250,370 1265,470 1270,600 1282,740")],
  at(1, 600, "1328,195 1345,240 1383,340"),
  [...at(1, 600, "1487,0 1520,65 1568,135"), ...at(2, 600, "10,150 30,175 45,240 65,305 90,370 130,440 160,485 200,530 215,560")],
  at(2, 600, "240,580 330,600 380,710"),
  at(2, 600, "415,645 440,665 480,760 510,820 560,870 570,930 590,1030"),
  [...at(2, 600, "650,880 685,905 720,1000 760,1078"), ...at(2, 1680, "785,65")],
  at(2, 600, "940,910 965,925 1000,980 1030,1040"),
  at(2, 600, "1200,815 1250,850 1268,910"),
  [...at(2, 600, "1275,980 1300,1070"), ...at(2, 1680, "1315,40")],
];
const sarUp = [
  at(0, 600, "178,810 200,765"),
  at(0, 1680, "292,630 310,530 330,440 368,335"),
  at(0, 1680, "392,400 422,340"),
  at(0, 1680, "500,540 515,500 530,400 552,290"),
  at(0, 1680, "733,835 760,740 790,620 803,550 815,460 825,390"),
  at(0, 1680, "1005,573 1040,572 1060,558"),
  at(0, 1680, "1284,778 1338,730 1350,640 1370,510 1400,380"),
  at(0, 1680, "1505,465 1525,430 1565,290"),
  at(1, 1680, "10,370 90,310 130,240 178,195"),
  [...at(1, 1680, "215,235 260,200 290,110 302,30"), ...at(1, 600, "310,1040 330,940")],
  at(1, 1680, "560,165 575,160 595,135"),
  at(1, 1680, "670,160 760,130"),
  [...at(1, 1680, "810,165 833,110 845,20"), ...at(1, 600, "850,940 865,765")],
  at(1, 600, "895,880 910,800 925,640"),
  at(1, 600, "975,610 1010,510 1085,370 1095,300 1115,180"),
  at(1, 600, "1290,835 1300,775 1313,655"),
  at(1, 600, "1390,612 1440,560 1455,480 1465,350 1485,215"),
  at(2, 600, "220,682 265,682"),
  at(2, 600, "385,808 410,780"),
  at(2, 1680, "595,100 645,0"),
  at(2, 1680, "788,165 805,160 845,80 870,0"),
  at(2, 600, "880,1078 940,1045"),
  [...at(2, 1680, "1030,98 1100,0"), ...at(2, 600, "1150,1035 1165,990 1190,900")],
  at(2, 1680, "1320,130 1370,125"),
  at(2, 1680, "1375,132 1402,105"),
];
const oliveDots = [at(0, 600, "270,440 290,495 330,630 360,720 400,840 440,950 480,1030 510,1078")];

// one round dot per bar
const dots = (runs) => runs.map((r) => sample(r, 2).map(([x, y]) => `M${x} ${y}h0`).join("")).join("");

function ghosts() {
  const rnd = seeded(9);
  const spans = [
    [160, 166, 450, 497], [208, 230, 450, 570], [300, 355, 450, 497], [390, 470, 450, 495], [520, 550, 450, 497],
    [718, 728, 450, 470], [790, 980, 450, 540], [759, 775, 123, 190], [982, 990, 110, 190], [990, 1000, 285, 420],
    [1050, 1080, 330, 400], [1120, 1250, 440, 545], [1290, 1420, 530, 640], [1450, 1610, 580, 690], [1620, 1680, 440, 510],
    [1700, 1850, 430, 500],
  ];
  return spans.map(([x1, x2, y1, y2]) => {
    let d = "";
    for (let x = x1; x < x2; x += 4 + Math.round(rnd() * 16)) {
      const top = Math.round(y1 + rnd() * (y2 - y1) * 0.5);
      d += `M${x} ${y2}L${x + 2} ${top}h4L${x + 7} ${Math.round(y2 - rnd() * 20)}`;
    }
    return d;
  }).join("");
}
const ghostPath = ghosts();

const signal60 = [
  ...at(0, 2610, "119,55 175,70 240,112 300,172 360,225 440,283 480,305 540,318 640,328 720,340 860,343 1060,340 1130,352 1210,362 1300,374 1360,377 1450,371 1568,363"),
  ...at(1, 2610, "230,362 300,359 400,355 480,356 560,361 640,369 700,374 830,379 900,377 960,398 1080,422 1120,427 1180,427 1240,408 1340,401 1440,409 1500,402 1568,392"),
  ...at(2, 2610, "60,385 150,381 240,391 400,400 560,410 700,410 860,402 1000,410 1140,414 1250,414 1320,419 1400,426"),
];
const signal24 = [
  ...at(0, 2610, "119,75 175,100 220,155 270,240 310,270 380,300 440,315 500,330 545,333 600,322 660,330 740,360 790,357 860,332 960,342 1060,345 1130,368 1240,378 1330,378 1430,362 1568,358"),
  ...at(1, 2610, "230,361 340,350 410,350 480,365 560,375 690,378 830,380 860,370 905,374 940,400 970,440 1015,459 1080,440 1150,390 1190,383 1250,400 1320,418 1400,405 1470,402 1540,375 1568,374"),
  ...at(2, 2610, "60,383 240,396 380,401 520,410 560,416 620,408 700,403 880,403 1000,413 1150,413 1260,415 1320,425 1400,434"),
];
const obv = [
  ...at(0, 2610, "119,90 140,103 170,105 175,245 185,195 200,195 220,250 250,260 265,292 300,280 330,310 370,315 378,328 385,305 425,310 445,355 470,340 480,328 520,318 600,325 640,335 660,355 700,365 708,380 730,350 740,340 800,345 805,322 855,322 860,332 960,345 1045,338 1062,340 1070,370 1110,380 1130,368 1210,376 1270,383 1330,374 1350,362 1430,362 1568,355"),
  ...at(1, 2610, "230,356 290,347 330,345 350,351 410,352 415,362 490,372 620,379 700,378 780,383 825,378 840,340 848,305 860,370 885,402 900,368 907,460 935,495 965,480 972,440 975,425 1000,435 1015,430 1040,452 1070,440 1090,340 1110,390 1128,370 1140,388 1190,390 1240,405 1265,440 1290,405 1330,415 1400,405 1455,405 1480,358 1490,370 1540,372 1568,378"),
  ...at(2, 2610, "100,388 240,396 360,405 520,410 560,420 597,412 600,398 700,400 880,408 1000,415 1150,415 1250,412 1280,425 1320,430 1400,436"),
];

function fillBetween() {
  const a = sample(obv, 1);
  const b = sample(signal24, 1);
  const out = { above: "", below: "" };
  a.forEach(([x, y], i) => {
    if (b[i] && b[i][1] !== y) out[y < b[i][1] ? "above" : "below"] += `M${x} ${y}V${b[i][1]}`;
  });
  return out;
}
const obvFill = fillBetween();

function volumeBars() {
  const rnd = seeded(31);
  const out = { up: "", down: "" };
  for (let x = 50; x < 1853; x += 2) {
    const busy = x < 300 ? 12 : x > 975 && x < 1110 ? 18 : 4;
    const h = 1 + Math.round(rnd() ** 3 * busy);
    out[rnd() < 0.5 ? "up" : "down"] += `M${x} 1037v-${h}`;
  }
  const spikes = [
    ...at(0, 2610, "175,55 388,435 427,441 442,411 261,447 329,450 310,459 601,435 734,447 858,447 1064,393 1045,462 1277,477"),
    ...at(1, 2610, "18,477 145,468 184,474 258,477 412,453 484,480 812,474 839,438 851,380 861,380 907,252 930,408 972,402 1075,390 1089,365 1105,432 1137,438 1212,468 1255,465 1283,462 1461,447 1487,459 1564,471"),
    ...at(2, 2610, "60,426 528,468 555,477 596,435 878,480 1268,468"),
  ];
  spikes.forEach(([x, y]) => (out.up += `M${x} ${y}V1037`));
  at(0, 2610, "180,360 187,465 212,460").forEach(([x, y]) => (out.down += `M${x} ${y}V1037`));
  at(1, 2610, "845,453 978,430 983,455").forEach(([x, y]) => (out.down += `M${x} ${y}V1037`));
  return out;
}
const volume = volumeBars();
</script>

<style>
body {
  margin: 0;
  background: #000000;
}
</style>

<style scoped>
.window {
  --edge: #808080;
  --face: #ececec;
  --blue: #1048c0;
  --red: #e01808;
  padding: 1px 2px 3px 1px;
  background: #000000;
  color: #000000;
  font-family: "Liberation Sans Narrow", "Liberation Sans", "Noto Sans CJK KR", sans-serif;
  font-size: 12px;
  line-height: 16px;
}
button,
input {
  box-sizing: border-box;
  margin: 0;
  padding: 0;
  border: 0;
  border-radius: 0;
  background: none;
  color: inherit;
  font: inherit;
}
button {
  display: flex;
  align-items: center;
  justify-content: center;
}
button svg path,
button svg circle {
  fill: none;
  stroke: #505050;
}
button svg .solid {
  fill: #444444;
  stroke: none;
}
button svg .soft {
  fill: #aaaaaa;
  stroke: none;
}
button svg .bold {
  stroke-width: 2;
}
button svg .ink {
  fill: #000000;
  stroke: none;
}
.titlebar {
  display: flex;
  align-items: center;
  height: 24px;
  padding: 0 3px;
  background: #395693;
  color: #ffffff;
}
.badge {
  box-sizing: border-box;
  width: 14px;
  height: 17px;
  border: 1px solid #ffffff;
  border-radius: 2px;
  background: #5a78b4;
  font-weight: bold;
  line-height: 15px;
  text-align: center;
}
.title {
  display: flex;
  flex: 1;
  gap: 8px;
  margin: 0 0 0 5px;
  overflow: hidden;
  font-size: 13px;
  font-weight: normal;
  white-space: nowrap;
}
.win-buttons {
  display: flex;
  gap: 4px;
}
.win-buttons button {
  width: 16px;
  height: 20px;
}
.win-buttons .split {
  border-left: 1px solid #6c84b4;
}
.win-buttons svg {
  width: 14px;
  height: 14px;
}
.win-buttons button path {
  stroke: #c8d4ea;
}
.body {
  margin: 0 1px 0 2px;
  padding: 5px 3px 3px;
  background: #d0d0d0;
}
.toolbar {
  display: flex;
  gap: 1px;
  height: 20px;
}
.tool,
.combo,
.group,
.stock {
  box-sizing: border-box;
  display: flex;
  height: 20px;
  border: 1px solid var(--edge);
  background: var(--face);
}
.tool {
  width: 20px;
}
.toolbar svg {
  flex: none;
  width: 15px;
  height: 15px;
}
.combo {
  background: #ffffff;
}
.combo > input,
.combo > span {
  flex: 1;
  width: 0;
  padding-left: 3px;
}
.combo button {
  width: 14px;
  border-left: 1px solid var(--edge);
  background: var(--face);
  color: #555555;
  font-size: 8px;
}
.dim {
  color: #777777;
}
.c-type {
  width: 32px;
}
.c-code {
  width: 68px;
}
.c-sound {
  width: 28px;
}
.c-num {
  width: 39px;
}
.c-num > input {
  padding: 0;
  text-align: center;
}
.c-count {
  width: 30px;
}
.c-count > input {
  padding-left: 7px;
}
.stock {
  width: 82px;
  align-items: center;
  gap: 3px;
  background: linear-gradient(135deg, #ffffff 91%, #b0b0b0 91%);
  color: #800040;
  font-size: 13px;
}
.stock i {
  width: 16px;
  margin-left: 1px;
  background: #907870;
  color: #ffffff;
  font-style: normal;
  text-align: center;
}
.group {
  border-right: 0;
}
.group button {
  width: 19px;
  border-right: 1px solid var(--edge);
}
.group .on {
  background: #4a80c4;
  color: #ffffff;
}
.total {
  width: 34px;
  color: #333333;
  line-height: 20px;
}
.check {
  display: flex;
  align-items: center;
  gap: 3px;
}
.check input {
  width: 13px;
  height: 13px;
  border: 1px solid var(--edge);
  background: #ffffff;
  appearance: none;
}
.quote {
  display: flex;
  gap: 2px;
  height: 20px;
  margin: 3px 0;
}
.cells,
.quote button {
  box-sizing: border-box;
  border: 1px solid var(--edge);
}
.cells {
  display: flex;
  width: 750px;
  background: #f0f0f0;
  line-height: 18px;
}
.q {
  box-sizing: border-box;
  text-align: right;
  white-space: nowrap;
}
.line {
  padding-right: 2px;
  border-right: 1px solid #a0a0a0;
}
.blue {
  color: var(--blue);
}
.red {
  color: var(--red);
}
.w73 { width: 73px; }
.w49 { width: 50px; }
.w68 { width: 68px; }
.w59 { width: 59px; }
.w43 { width: 43px; }
.w82 { width: 82px; }
.w38 { width: 39px; }
.w20 { width: 21px; }
.quote button {
  width: 40px;
  font-size: 13px;
}
.quote .buy {
  background: #f5cfcb;
}
.quote .sell {
  background: #c8dff5;
}
.chart {
  display: block;
  width: 100%;
  height: auto;
}
.chart path,
.chart rect {
  shape-rendering: crispEdges;
}
.paper {
  fill: #ffffff;
}
.plot-bg {
  fill: #f8f8f8;
}
.band {
  fill: #ccffcc;
}
.profile {
  fill: #ffffff;
}
.profile-now {
  fill: #ffcc99;
}
.profile-box {
  fill: #ffffff;
  stroke: #808080;
}
.grid {
  fill: none;
  stroke: #d0d0d0;
  stroke-dasharray: 4 3;
}
.ghost {
  fill: none;
  stroke: #ffffff;
  stroke-dasharray: 4 3;
}
.axis {
  fill: none;
  stroke: #909090;
}
.ln {
  fill: none;
  stroke-linecap: round;
  stroke-linejoin: round;
}
.txt {
  fill: #444444;
  font-size: 12px;
}
.small {
  font-size: 11px;
}
.name {
  font-size: 13px;
}
.strong {
  font-weight: bold;
}
.tag-now {
  fill: #1258c8;
}
.tag {
  fill: #ffdc6e;
  stroke: #000000;
}
.name-box {
  fill: #f0f0f0;
  stroke: #b0b0b0;
}
.name-mark {
  fill: #c0c0c0;
  stroke: #808080;
}
.table-icon {
  fill: none;
  stroke: #333333;
}
.close-box {
  fill: #444444;
}
.bottom {
  display: flex;
  height: 17px;
  background: #f0f0f0;
}
.raised {
  width: 17px;
  border: 1px solid #ffffff;
  border-right-color: #707070;
  border-bottom: 2px solid #707070;
  background: #f0f0f0;
}
.bottom svg {
  flex: none;
  width: 14px;
  height: 14px;
}
.track {
  display: flex;
  flex: 1;
}
.before,
.after {
  background: repeating-conic-gradient(#ececec 0 25%, #ffffff 0 50%) 0 0 / 2px 2px;
}
.before {
  flex: 724;
}
.after {
  flex: 248;
}
.thumb {
  flex: 550;
  border: 1px solid #ffffff;
  border-right-color: #707070;
  border-bottom: 2px solid #707070;
}
.play {
  display: flex;
}
.speed {
  display: flex;
  flex-direction: column;
  width: 70px;
  margin: 0 6px 0 5px;
}
.speed input {
  width: 70px;
  height: 11px;
  appearance: none;
  background: linear-gradient(#808080, #808080) 0 4px / 100% 2px no-repeat;
}
.speed input::-webkit-slider-thumb {
  width: 4px;
  height: 11px;
  border: 1px solid #808080;
  background: #f0f0f0;
  appearance: none;
}
.ticks {
  height: 3px;
  margin: 2px;
  background: repeating-linear-gradient(90deg, #000000 0 1px, transparent 1px 8px);
}
.tools {
  display: flex;
}
.tools button {
  width: 17px;
}
.tools .lit {
  background: #ffffff;
}
.tools .letter {
  color: #444444;
  font-size: 16px;
  font-weight: bold;
}
</style>
